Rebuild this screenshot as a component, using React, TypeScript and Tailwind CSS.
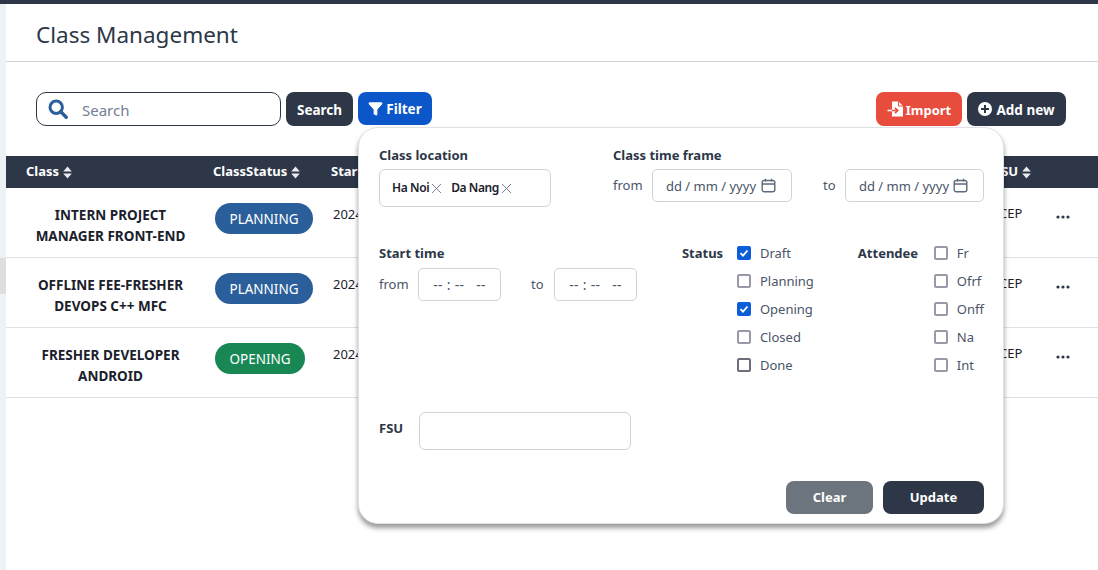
import { Filter } from "lucide-react";

const font = "font-['Noto_Sans','Open_Sans',sans-serif]";

const rows = [
  { name: ["INTERN PROJECT", "MANAGER FRONT-END"], status: "PLANNING", color: "bg-[#2b5f9b] w-[98px]" },
  { name: ["OFFLINE FEE-FRESHER", "DEVOPS C++ MFC"], status: "PLANNING", color: "bg-[#2b5f9b] w-[98px]" },
  { name: ["FRESHER DEVELOPER", "ANDROID"], status: "OPENING", color: "bg-[#198754] w-[90px]" },
];

function Sort() {
  return (
    <svg width="9" height="13" viewBox="0 0 9 13" className="ml-[4px] inline-block">
      <path d="M4.5 0.5 L8.8 5.4 H0.2 Z M4.5 12.5 L0.2 7.6 H8.8 Z" fill="#e9ebee" />
    </svg>
  );
}

function HeadCell({ label, className }: { label: string; className: string }) {
  return (
    <div className={`flex items-center text-[13px] font-bold text-white ${className}`}>
      {label}
      <Sort />
    </div>
  );
}

function Dots() {
  return (
    <svg width="14" height="4" viewBox="0 0 14 4">
      <circle cx="2" cy="2" r="1.6" fill="#2d3748" />
      <circle cx="7" cy="2" r="1.6" fill="#2d3748" />
      <circle cx="12" cy="2" r="1.6" fill="#2d3748" />
    </svg>
  );
}

function Check({ label, checked, dark }: { label: string; checked?: boolean; dark?: boolean }) {
  return (
    <div className="flex h-[28px] items-center">
      {checked ? (
        <span className="flex h-[14px] w-[14px] items-center justify-center rounded-[2px] bg-[#0b5ed7]">
          <svg width="10" height="10" viewBox="0 0 10 10">
            <path d="M1.5 5.2 L4 7.7 L8.5 2.5" fill="none" stroke="white" strokeWidth="1.8" />
          </svg>
        </span>
      ) : (
        <span className={`h-[14px] w-[14px] rounded-[2px] border-2 ${dark ? "border-[#6e6d7a]" : "border-[#9a99a8]"}`} />
      )}
      <span className="ml-[9px] pt-[2px] text-[13px] text-[#4a5568]">{label}</span>
    </div>
  );
}

function DateBox({ className }: { className: string }) {
  return (
    <div className={`flex h-[33px] items-center justify-between rounded-[5px] border border-[#ced4da] pl-[13px] pr-[15px] text-[13px] text-[#4a5568] ${className}`}>
      <span className="pt-[2px]">dd / mm / yyyy</span>
      <svg width="15" height="15" viewBox="0 0 15 15" fill="none" stroke="#5f6b7a" strokeWidth="1.4">
        <rect x="1.2" y="2.5" width="12.6" height="11.3" rx="2" />
        <path d="M1.2 6 H13.8 M4.5 0.8 V3.5 M10.5 0.8 V3.5" />
      </svg>
    </div>
  );
}

function TimeBox() {
  return (
    <div className="flex h-[33px] w-[83px] items-center justify-center whitespace-pre rounded-[5px] border border-[#ced4da] text-[14px] tracking-[0.3px] text-[#4a5568]">
      {"-- : --   --"}
    </div>
  );
}

function Tag({ label }: { label: string }) {
  return (
    <span className="flex items-center">
      <span className="text-[12px] font-semibold tracking-[-0.4px] text-[#1a202c]">{label}</span>
      <svg width="11" height="11" viewBox="0 0 11 11" className="ml-[2px]">
        <path d="M1 1 L10 10 M10 1 L1 10" stroke="#6b7280" strokeWidth="0.9" />
      </svg>
    </span>
  );
}

function FilterPanel() {
  return (
    <div className="absolute left-[352px] top-[123px] z-10 h-[397px] w-[646px] rounded-[20px] border border-[#dee2e6] bg-white pl-[20px] pr-[19px] pt-[18px] shadow-[0_4px_5px_rgba(0,0,0,0.4)]">
      <div className="flex">
        <div className="w-[234px]">
          <div className="text-[13px] font-bold leading-[18px] text-[#2d3748]">Class location</div>
          <div className="mt-[5px] flex h-[38px] w-[172px] items-center gap-[9px] rounded-[6px] border border-[#ced4da] pl-[12px]">
            <Tag label="Ha Noi" />
            <Tag label="Da Nang" />
          </div>
        </div>
        <div>
          <div className="text-[13px] font-bold leading-[18px] text-[#2d3748]">Class time frame</div>
          <div className="mt-[5px] flex items-center text-[13px] text-[#4a5568]">
            <span className="w-[39px]">from</span>
            <DateBox className="w-[140px]" />
            <span className="ml-[31px] w-[22px]">to</span>
            <DateBox className="w-[139px]" />
          </div>
        </div>
      </div>
      <div className="mt-[37px] flex">
        <div className="w-[303px]">
          <div className="text-[13px] font-bold leading-[18px] text-[#2d3748]">Start time</div>
          <div className="mt-[6px] flex items-center text-[13px] text-[#4a5568]">
            <span className="w-[39px]">from</span>
            <TimeBox />
            <span className="ml-[30px] w-[23px]">to</span>
            <TimeBox />
          </div>
        </div>
        <div className="flex w-[176px] -mt-[5px]">
          <div className="w-[55px] pt-[5px] text-[13px] font-bold leading-[18px] text-[#2d3748]">Status</div>
          <div>
            <Check label="Draft" checked />
            <Check label="Planning" />
            <Check label="Opening" checked />
            <Check label="Closed" />
            <Check label="Done" dark />
          </div>
        </div>
        <div className="flex -mt-[5px]">
          <div className="w-[76px] pt-[5px] text-[13px] font-bold leading-[18px] text-[#2d3748]">Attendee</div>
          <div>
            <Check label="Fr" />
            <Check label="Ofrf" />
            <Check label="Onff" />
            <Check label="Na" />
            <Check label="Int" />
          </div>
        </div>
      </div>
      <div className="mt-[33px] flex items-start">
        <div className="w-[40px] pt-[7px] text-[13px] font-bold text-[#2d3748]">FSU</div>
        <div className="h-[38px] w-[212px] rounded-[6px] border border-[#ced4da]" />
      </div>
      <div className="mt-[31px] flex justify-end gap-[10px]">
        <button className="h-[33px] w-[87px] rounded-[8px] bg-[#6c757d] text-[13px] font-bold text-white">Clear</button>
        <button className="h-[33px] w-[101px] rounded-[8px] bg-[#2d3748] text-[13px] font-bold text-white">Update</button>
      </div>
    </div>
  );
}

export default function App() {
  return (
    <div className={`flex h-[570px] w-[1098px] flex-col overflow-hidden bg-white ${font}`}>
      <div className="h-[4px] bg-[#2d3748]" />
      <div className="flex flex-1">
        <aside className="w-[6px] bg-[#edf2f7] pt-[254px]">
          <div className="h-[36px] bg-[#dedede]" />
        </aside>
        <main className="relative flex-1">
          <div className="flex h-[58px] items-center border-b border-[#ced4da] pl-[30px] pt-[6px] text-[22.5px] leading-none text-[#2d3748]">
            Class Management
          </div>
          <div className="mt-[30px] flex pl-[30px] pr-[32px]">
            <div className="flex h-[34px] w-[245px] items-center rounded-[10px] border border-[#2d3748] pl-[11px]">
              <svg width="20" height="20" viewBox="0 0 20 20" fill="none" stroke="#2b5f9b">
                <circle cx="8.2" cy="8.2" r="6.2" strokeWidth="3" />
                <path d="M12.8 12.8 L18.2 18.2" strokeWidth="3.4" strokeLinecap="round" />
              </svg>
              <span className="ml-[14px] pt-[3px] text-[15px] text-[#718096]">Search</span>
            </div>
            <button className="ml-[5px] h-[34px] w-[67px] rounded-[8px] bg-[#2d3748] pt-[2px] text-[13.5px] font-bold text-white">Search</button>
            <button className="ml-[5px] flex h-[33px] w-[74px] items-center justify-center rounded-[8px] bg-[#0b57c9] text-[13.5px] font-bold text-white">
              <Filter size={15} fill="white" className="mr-[3px]" />
              <span className="pt-[2px]">Filter</span>
            </button>
            <div className="ml-auto flex gap-[5px]">
              <button className="flex h-[34px] w-[86px] items-center justify-center rounded-[8px] bg-[#e74c3c] text-[13px] font-bold text-white">
                <svg width="18" height="16" viewBox="0 0 18 16" className="mr-[1px]">
                  <path d="M5 0.5 H11.5 L16 5 V15.5 H5 Z" fill="white" />
                  <path d="M11.5 0.5 V5 H16" fill="none" stroke="#e74c3c" strokeWidth="1" />
                  <path d="M0.5 9.5 H5" fill="none" stroke="white" strokeWidth="1.6" />
                  <path d="M5 9.5 H10.5 M8 6.8 L10.8 9.5 L8 12.2" fill="none" stroke="#e74c3c" strokeWidth="1.6" />
                </svg>
                <span className="pt-[3px]">Import</span>
              </button>
              <button className="flex h-[34px] w-[99px] items-center justify-center rounded-[8px] bg-[#2d3748] text-[13.5px] font-bold text-white">
                <svg width="14" height="14" viewBox="0 0 14 14" className="mr-[4px]">
                  <circle cx="7" cy="7" r="7" fill="white" />
                  <path d="M7 3 V11 M3 7 H11" stroke="#2d3748" strokeWidth="2" />
                </svg>
                <span className="pt-[3px]">Add new</span>
              </button>
            </div>
          </div>
          <div className="mt-[30px]">
            <div className="flex h-[32px] items-center bg-[#2d3748] pl-[20px]">
              <HeadCell label="Class" className="w-[187px]" />
              <HeadCell label="ClassStatus" className="w-[118px]" />
              <HeadCell label="Start" className="w-[663px]" />
              <HeadCell label="FSU" className="" />
            </div>
            {rows.map((r) => (
              <div key={r.name[0]} className="flex h-[70px] border-b border-[#dee2e6]">
                <div className="w-[209px] pt-[17px] text-center text-[13.5px] font-bold leading-[21px] text-[#1a202c]">
                  <div>{r.name[0]}</div>
                  <div>{r.name[1]}</div>
                </div>
                <div className="w-[116px] pt-[15px]">
                  <span className={`flex h-[31px] items-center justify-center rounded-full pt-[2px] text-[13.5px] text-white ${r.color}`}>{r.status}</span>
                </div>
                <div className="w-[668px] pl-[2px] pt-[17px] text-[13px] text-[#1a202c]">2024</div>
                <div className="w-[57px] pt-[16px] text-[13px] text-[#1a202c]">CEP</div>
                <div className="pt-[27px]"><Dots /></div>
              </div>
            ))}
          </div>
          <FilterPanel />
        </main>
      </div>
    </div>
  );
}
